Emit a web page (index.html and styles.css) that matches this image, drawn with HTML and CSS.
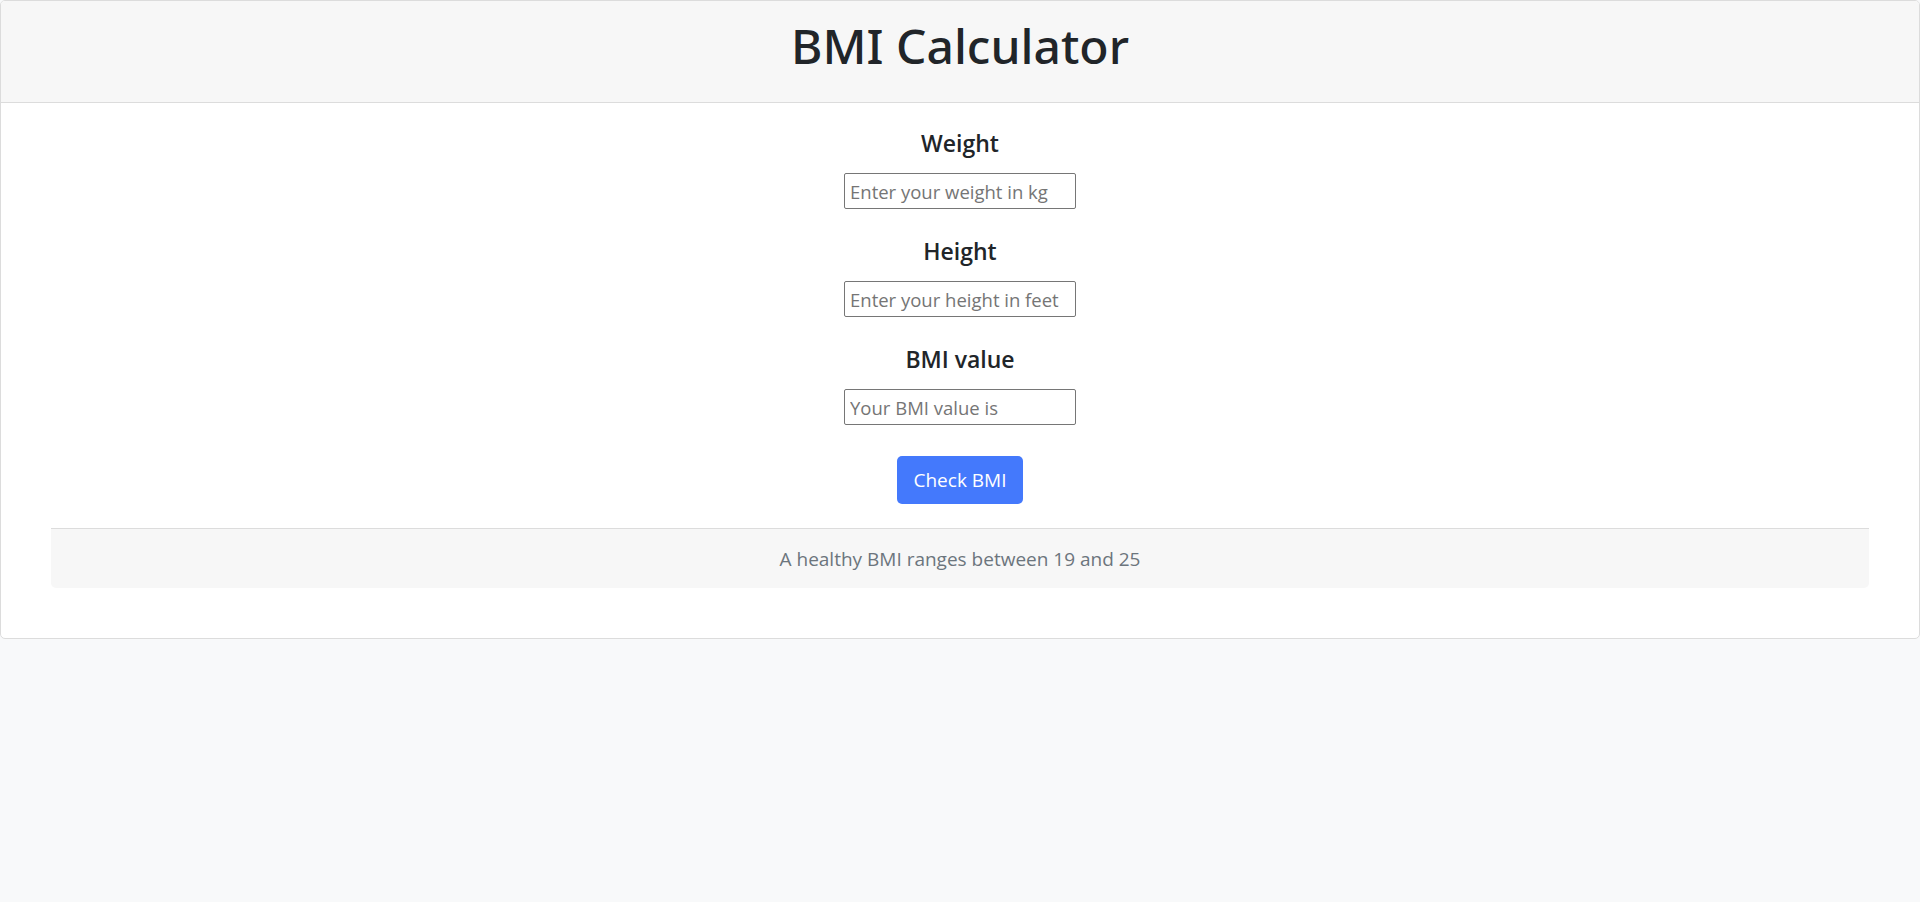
FILE: index.html
```html
<!DOCTYPE html>
<html lang="en">
<head>
<meta charset="utf-8">
<title>BMI Calculator</title>
<link rel="stylesheet" href="styles.css">
</head>
<body>
<div class="card">
  <div class="card-header">
    <h1 class="title">BMI Calculator</h1>
  </div>
  <div class="card-body">
    <div class="group">
      <h4 class="label">Weight</h4>
      <input class="field" type="text" placeholder="Enter your weight in kg">
    </div>
    <div class="group">
      <h4 class="label">Height</h4>
      <input class="field" type="text" placeholder="Enter your height in feet">
    </div>
    <div class="group group-last">
      <h4 class="label">BMI value</h4>
      <input class="field" type="text" placeholder="Your BMI value is">
    </div>
    <button class="btn" type="button">Check BMI</button>
    <div class="footer">A healthy BMI ranges between 19 and 25</div>
  </div>
</div>
</body>
</html>
```
FILE: styles.css
```css
* { box-sizing: border-box; }
html, body { margin: 0; padding: 0; }
body {
  background: #f8f9fa;
  font-family: "Open Sans", "Noto Sans", "Liberation Sans", sans-serif;
  color: #212529;
  height: 902px;
}
.card {
  background: #fff;
  border: 1px solid #dcdcdc;
  border-radius: 5px;
  height: 639px;
  overflow: hidden;
}
.card-header {
  background: #f7f7f7;
  border-bottom: 1px solid #dcdcdc;
  height: 102px;
  padding-top: 16px;
  text-align: center;
}
.title {
  margin: 0;
  font-family: "Noto Sans", "Open Sans", sans-serif;
  font-size: 48px;
  line-height: 58px;
  font-weight: 500;
  color: #212529;
}
.card-body {
  display: flex;
  flex-direction: column;
  align-items: center;
  padding: 26px 50px 0;
}
.group {
  display: flex;
  flex-direction: column;
  align-items: center;
  margin-bottom: 28px;
}
.group-last { margin-bottom: 31px; }
.label {
  margin: 0 0 15px;
  font-size: 23px;
  line-height: 29px;
  font-weight: 600;
  color: #212529;
}
.field {
  width: 232px;
  height: 36px;
  border: 1px solid #767676;
  border-radius: 2px;
  padding: 0 5px;
  font-family: inherit;
  font-size: 18.5px;
  color: #212529;
  background: #fff;
  outline: none;
}
.field::placeholder { color: #757575; }
.btn {
  width: 126px;
  height: 48px;
  border: none;
  border-radius: 5px;
  background: #4479fc;
  color: #fff;
  font-family: inherit;
  font-size: 19px;
  cursor: pointer;
  padding: 0;
  margin-bottom: 24px;
}
.footer {
  align-self: stretch;
  height: 60px;
  background: #f7f7f7;
  border-top: 1px solid #dcdcdc;
  border-radius: 0 0 5px 5px;
  display: flex;
  align-items: center;
  justify-content: center;
  font-size: 19px;
  color: #6c757d;
  padding-top: 1px;
}
```
